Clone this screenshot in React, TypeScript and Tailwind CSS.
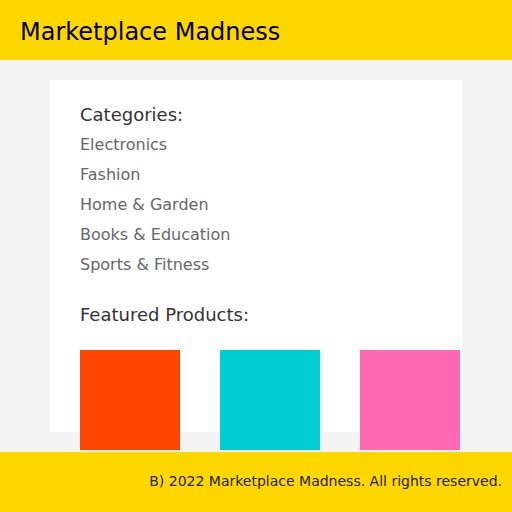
const categories = ["Electronics", "Fashion", "Home & Garden", "Books & Education", "Sports & Fitness"];

const products = ["bg-[#ff4500]", "bg-[#00ced1]", "bg-[#ff69b4]"];

export default function App() {
  return (
    <div className="min-h-[512px] bg-[#f4f4f4] font-['DejaVu_Sans',sans-serif]">
      <header className="h-[60px] bg-[#ffd700] flex items-center px-[20px] pt-[4px]">
        <h1 className="text-[24px] leading-[28px] text-black">Marketplace Madness</h1>
      </header>

      <main className="mx-[50px] my-[20px] h-[352px] bg-white px-[30px] pt-[24px]">
        <h2 className="text-[18px] leading-[21px] text-[#333]">Categories:</h2>
        <ul className="mt-[5px]">
          {categories.map((c) => (
            <li key={c} className="text-[16px] leading-[30px] text-[#666]">
              {c}
            </li>
          ))}
        </ul>

        <h2 className="mt-[24px] text-[18px] leading-[21px] text-[#333]">Featured Products:</h2>
        <div className="mt-[25px] flex gap-[40px]">
          {products.map((p) => (
            <div key={p} className={`w-[100px] h-[100px] shrink-0 ${p}`} />
          ))}
        </div>
      </main>

      <footer className="h-[60px] bg-[#ffd700] flex items-center justify-end pr-[10px] pb-[2px]">
        <p className="text-[14px] text-[#222]">B) 2022 Marketplace Madness. All rights reserved.</p>
      </footer>
    </div>
  );
}
